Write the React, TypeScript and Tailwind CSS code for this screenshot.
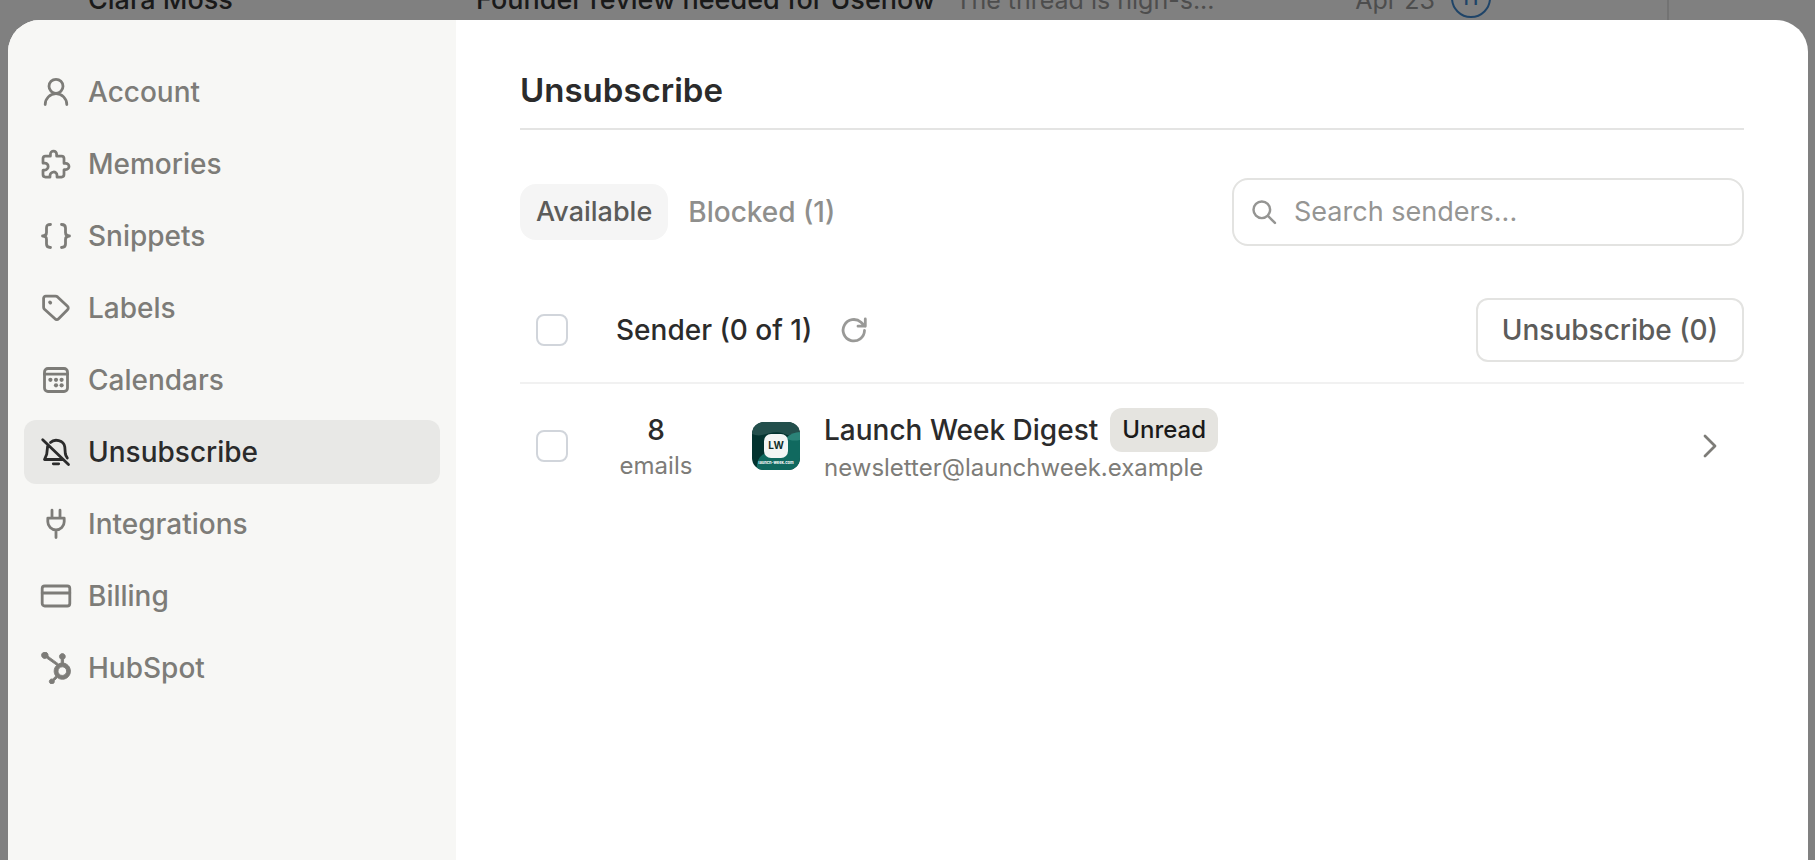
import React from "react";
import { FaHubspot } from "react-icons/fa";
import { IoExtensionPuzzleOutline } from "react-icons/io5";

interface IconProps {
    children: React.ReactNode;
    className?: string;
}

const Icon: React.FC<IconProps> = ({ children, className = "size-8" }) => (
    <svg
        className={className}
        viewBox="0 0 32 32"
        fill="none"
        stroke="currentColor"
        strokeWidth="2.8"
        strokeLinecap="round"
        strokeLinejoin="round"
        aria-hidden="true"
    >
        {children}
    </svg>
);

const navItems = [
    {
        label: "Account",
        icon: (
            <Icon>
                <circle cx="16" cy="10.3" r="7" />
                <path d="M5.200 28.500a10.800 10.800 0 0 1 21.600 0" />
            </Icon>
        ),
    },
    {
        label: "Memories",
        icon: <IoExtensionPuzzleOutline className="size-8 [&_path]:stroke-[44px]" />,
    },
    {
        label: "Snippets",
        icon: (
            <Icon>
                <path d="M10.500 4.500c-3 0-4 1-4 3.500v4.500c0 2-1 3.500-4 3.500 3 0 4 1.500 4 3.500V24c0 2.500 1 3.500 4 3.500M21.500 4.500c3 0 4 1 4 3.500v4.500c0 2 1 3.500 4 3.500-3 0-4 1.500-4 3.500V24c0 2.500-1 3.500-4 3.500" />
            </Icon>
        ),
    },
    {
        label: "Labels",
        icon: (
            <Icon>
                <path d="M3.600 6.300a2.200 2.200 0 0 1 2.200-2.200h9.700c.8 0 1.500.3 2.100.8l9.900 9.300a2.500 2.500 0 0 1 0 3.600l-8.900 9a2.500 2.500 0 0 1-3.600 0L4.500 17.300a3 3 0 0 1-.9-2.100z" />
                <path d="M9.900 10.300l.5.500" strokeWidth="3.4" />
            </Icon>
        ),
    },
    {
        label: "Calendars",
        icon: (
            <Icon>
                <rect x="4.500" y="4.500" width="23" height="23" rx="3.500" />
                <path d="M4.500 10.200h23" />
                <g fill="currentColor" stroke="none">
                    <circle cx="10.400" cy="15.800" r="2.100" />
                    <circle cx="16" cy="15.800" r="2.100" />
                    <circle cx="21.600" cy="15.800" r="2.100" />
                    <circle cx="16" cy="21.300" r="2.100" />
                    <circle cx="21.600" cy="21.300" r="2.100" />
                </g>
            </Icon>
        ),
    },
    {
        label: "Unsubscribe",
        icon: (
            <Icon>
                <path d="M2.700 3.700L28.500 28.500M10.500 6.500c4-4 13.300-2.500 14.300 4.500l.5 6.500c.2 2 1 3 2 4.500M7.600 10.500l-.9 7.800-2.200 5.200h17.700M13.300 27.800h5.400" />
            </Icon>
        ),
    },
    {
        label: "Integrations",
        icon: (
            <Icon>
                <path d="M12 2.200v8M20 2.200v8M7.800 10.200h16.400v3.500a8.200 8.200 0 0 1-16.400 0zM16 22v7.500" />
            </Icon>
        ),
    },
    {
        label: "Billing",
        icon: (
            <Icon>
                <rect x="2.200" y="6" width="27.600" height="20" rx="2.500" />
                <path d="M2.200 13h27.600" />
            </Icon>
        ),
    },
    {
        label: "HubSpot",
        icon: <FaHubspot className="size-8 stroke-current stroke-[14px]" />,
    },
];

const Sidebar: React.FC<{ active: string }> = ({ active }) => (
    <aside className="w-112 shrink-0 bg-[#f7f7f5] px-4 py-10">
        <nav className="flex flex-col gap-2">
            {navItems.map(({ label, icon }) => (
                <a
                    key={label}
                    href={`#${label.toLowerCase()}`}
                    className={`flex h-16 items-center gap-4 rounded-xl px-4 ${
                        label === active ? "bg-[#e8e8e6] text-[#2b2b2b]" : "text-[#7d7c78]"
                    }`}
                >
                    {icon}
                    {label}
                </a>
            ))}
        </nav>
    </aside>
);

// Inbox list that stays visible behind the dialog
const Inbox: React.FC = () => (
    <div className="flex h-full bg-[#808080]">
        <div className="-mt-6 flex h-11 flex-1 items-center text-[27px] whitespace-nowrap text-[#1a1a1a]">
            <span className="w-119 shrink-0 pt-1 pl-22">Clara Moss</span>
            <span className="pt-1">Founder review needed for Usenow</span>
            <span className="ml-5 pt-1 text-[25px] font-normal text-[#4d4d4d]">The thread is high-s...</span>
            <span className="ml-auto pt-1 text-[25px] font-normal text-[#4d4d4d]">Apr 23</span>
            <span className="mr-44 ml-4 flex size-10 items-center justify-center rounded-full border-2 border-[#1f4468] text-xl text-[#1f4468]">
                H
            </span>
        </div>
        <div className="w-37 shrink-0 border-l-2 border-[#737373]" />
    </div>
);

const SenderLogo: React.FC = () => (
    <svg className="size-12 shrink-0 rounded-xl" viewBox="0 0 48 48" role="img" aria-label="Launch Week">
        <rect width="48" height="48" fill="#03332f" />
        <path d="M0 0h48v14c-6 3-12-1-18-3-7-2-14 1-20 2-4 1-7 0-10-1z" fill="#234f4c" />
        <path d="M5 48c-1-9 3-15 9-17 8-3 12-6 18-13 4-4 9-7 16-7v37z" fill="#10695f" />
        <path d="M34 16c4-4 9-6 14-6v8c-5 1-10 1-14-2z" fill="#2b8378" />
        <rect x="12" y="12" width="24" height="24" rx="7" fill="#f3f5f4" />
        <text x="24" y="27" textAnchor="middle" fontSize="10" fontWeight="700" fill="#102f2c">
            LW
        </text>
        <text x="24" y="42" textAnchor="middle" fontSize="4" fontWeight="700" fill="#fff">
            launch-week.com
        </text>
    </svg>
);

const Checkbox: React.FC<{ label: string }> = ({ label }) => (
    <input
        type="checkbox"
        aria-label={label}
        className="size-8 shrink-0 appearance-none rounded-lg border-2 border-[#d1d5db] bg-white checked:bg-[#2b2b2b]"
    />
);

const App: React.FC = () => {
    return (
        <div className="relative h-screen overflow-hidden font-[Inter,sans-serif] text-[28px] leading-9 font-medium">
            <Inbox />
            <div
                role="dialog"
                aria-label="Settings"
                className="absolute top-5 right-[7px] bottom-0 left-2 flex overflow-hidden rounded-t-[32px] bg-white"
            >
                <Sidebar active="Unsubscribe" />
                <main className="min-w-0 flex-1 px-16 pt-[50px]">
                    <h1 className="border-b-2 border-[#e4e4e3] pb-[18px] text-[33px] leading-10 font-semibold text-[#2b2b2b]">
                        Unsubscribe
                    </h1>

                    <div className="mt-12 flex items-center justify-between">
                        <div className="flex gap-1">
                            <button className="h-14 rounded-2xl bg-[#f5f5f5] px-4 text-[27px] text-[#5c5c5a]">
                                Available
                            </button>
                            <button className="h-14 rounded-2xl px-4 text-[#8f8f8d]">Blocked (1)</button>
                        </div>
                        <label className="flex h-17 w-lg items-center gap-4 rounded-2xl border-2 border-[#e3e3e1] px-4 text-[#959593]">
                            <Icon className="size-7 shrink-0">
                                <circle cx="13.500" cy="13.500" r="9.500" />
                                <path d="M20.500 20.500l8 8" />
                            </Icon>
                            <input
                                type="text"
                                aria-label="Search senders"
                                placeholder="Search senders..."
                                className="min-w-0 flex-1 text-[27px] font-normal outline-none placeholder:text-[#959593]"
                            />
                        </label>
                    </div>

                    <div className="mt-8 flex h-[106px] items-center border-b-2 border-[#f1f1f1] pl-4 text-[#2b2b2b]">
                        <Checkbox label="Select all senders" />
                        <span className="ml-12">Sender (0 of 1)</span>
                        <button aria-label="Refresh" className="ml-[26px] text-[#999997]">
                            <Icon className="size-8">
                                <path d="M26.500 16.500A10.700 10.700 0 1 1 23 8.300l4 3.900M27.300 5v7.200H20" />
                            </Icon>
                        </button>
                        <button className="ml-auto h-16 rounded-xl border-2 border-[#e3e3e1] px-6 text-[#5c5c5a]">
                            Unsubscribe (0)
                        </button>
                    </div>

                    <ul>
                        <li className="flex h-31 items-center pr-[18px] pl-4 text-[#2b2b2b]">
                            <Checkbox label="Select Launch Week Digest" />
                            <div className="ml-12 flex w-20 flex-col items-center pt-1">
                                <span>8</span>
                                <span className="text-2xl leading-9 font-normal text-[#7d7c78]">emails</span>
                            </div>
                            <div className="ml-14">
                                <SenderLogo />
                            </div>
                            <div className="ml-6">
                                <div className="flex items-center gap-3">
                                    <span>Launch Week Digest</span>
                                    <span className="flex h-11 items-center rounded-xl bg-[#e5e4e0] px-3 text-2xl text-[#1a1a1a]">
                                        Unread
                                    </span>
                                </div>
                                <div className="text-2xl leading-8 font-normal text-[#7d7c78]">
                                    newsletter@launchweek.example
                                </div>
                            </div>
                            <button aria-label="Open sender" className="ml-auto text-[#7d7c78]">
                                <Icon>
                                    <path d="M11 6l10 10-10 10" />
                                </Icon>
                            </button>
                        </li>
                    </ul>
                </main>
            </div>
        </div>
    );
};

export default App;
